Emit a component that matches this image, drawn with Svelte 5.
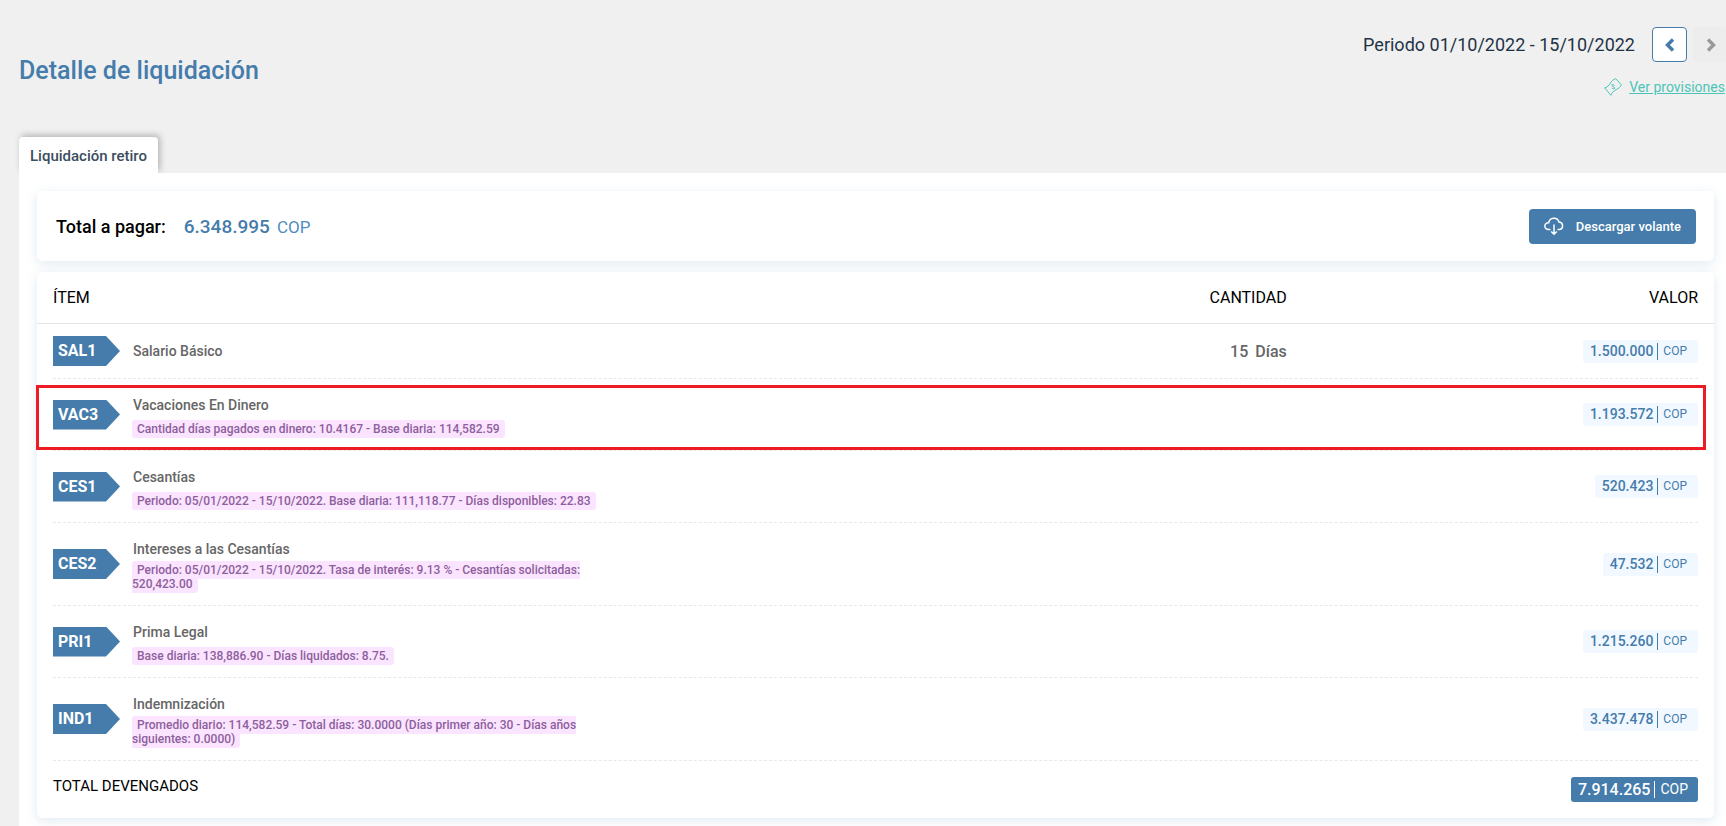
<script lang="ts">
	type Item = {
		code: string;
		name: string;
		note?: string;
		long?: boolean;
		quantity?: string;
		value: string;
		highlighted?: boolean;
	};

	const items: Item[] = [
		{ code: 'SAL1', name: 'Salario Básico', quantity: '15', value: '1.500.000' },
		{
			code: 'VAC3',
			name: 'Vacaciones En Dinero',
			note: 'Cantidad días pagados en dinero: 10.4167 - Base diaria: 114,582.59',
			value: '1.193.572',
			highlighted: true
		},
		{
			code: 'CES1',
			name: 'Cesantías',
			note: 'Periodo: 05/01/2022 - 15/10/2022. Base diaria: 111,118.77 - Días disponibles: 22.83',
			value: '520.423'
		},
		{
			code: 'CES2',
			name: 'Intereses a las Cesantías',
			note: 'Periodo: 05/01/2022 - 15/10/2022. Tasa de interés: 9.13 % - Cesantías solicitadas: 520,423.00',
			long: true,
			value: '47.532'
		},
		{
			code: 'PRI1',
			name: 'Prima Legal',
			note: 'Base diaria: 138,886.90 - Días liquidados: 8.75.',
			value: '1.215.260'
		},
		{
			code: 'IND1',
			name: 'Indemnización',
			note: 'Promedio diario: 114,582.59 - Total días: 30.0000 (Días primer año: 30 - Días años siguientes: 0.0000)',
			long: true,
			value: '3.437.478'
		}
	];
</script>

<div class="page">
	<header class="page-header">
		<h1>Detalle de liquidación</h1>
		<div class="header-side">
			<div class="period">
				<span>Periodo 01/10/2022 - 15/10/2022</span>
				<div class="period-nav">
					<button type="button" aria-label="Periodo anterior">
						<svg width="12" height="14" viewBox="0 0 12 14">
							<path d="M9 1.500 3.500 7 9 12.500" />
						</svg>
					</button>
					<button type="button" aria-label="Periodo siguiente" disabled>
						<svg width="12" height="14" viewBox="0 0 12 14">
							<path d="M3 1.500 8.500 7 3 12.500" />
						</svg>
					</button>
				</div>
			</div>
			<a class="provisions" href="#provisiones">
				<svg width="18" height="18" viewBox="0 0 18 18">
					<path d="M.7 9.800C3.200 9.200 5 7.500 6.300 5.200 7.500 3.200 9.200 1.300 11.700.7L17.300 6.700C16.600 9.200 14.500 10.300 12.200 11.600 9.800 13 7.700 14.500 6.900 17.300Z" />
					<path d="M10.600 7.300c-.7-.9-2.400-.8-2.500.3-.1 1.200 2.400.9 2.400 2.200 0 1.100-1.800 1.200-2.700.3M7.600 6.300l.8.900M10.400 10.300l.8.900" />
				</svg>
				<span>Ver provisiones</span>
			</a>
		</div>
	</header>

	<nav class="tabs">
		<button type="button" class="tab">Liquidación retiro</button>
	</nav>

	<main class="panel">
		<section class="card summary">
			<p class="total">
				<span class="total-label">Total a pagar:</span>
				<span class="total-value">6.348.995</span>
				<span class="total-currency">COP</span>
			</p>
			<button type="button" class="download">
				<svg width="20" height="20" viewBox="0 0 20 20">
					<path d="M6.500 13.500H4.300a3.400 3.400 0 0 1-.1-6.800h.5A5.300 5.300 0 0 1 15 6a3.800 3.800 0 0 1 .6 7.500H13.500" />
					<path d="M10 8.500v9.500M7.200 15.500 10 18.200l2.800-2.700" />
				</svg>
				<span>Descargar volante</span>
			</button>
		</section>

		<table class="card">
			<thead>
				<tr>
					<th>ÍTEM</th>
					<th>CANTIDAD</th>
					<th>VALOR</th>
				</tr>
			</thead>
			<tbody>
				{#each items as item}
					<tr class:highlighted={item.highlighted}>
						<td class="concept">
							<span class="code">{item.code}</span>
							<div class="detail" class:long={item.long}>
								<p class="name">{item.name}</p>
								{#if item.note}
									<p class="note"><span>{item.note}</span></p>
								{/if}
							</div>
						</td>
						<td class="quantity">
							{#if item.quantity}
								<span>{item.quantity}</span>
								<span>Días</span>
							{/if}
						</td>
						<td class="value">
							<span class="pill">
								<span class="amount">{item.value}</span>
								<span class="currency">COP</span>
							</span>
						</td>
					</tr>
				{/each}
			</tbody>
			<tfoot>
				<tr>
					<th colspan="2">TOTAL DEVENGADOS</th>
					<td class="value">
						<span class="pill pill-total">
							<span class="amount">7.914.265</span>
							<span class="currency">COP</span>
						</span>
					</td>
				</tr>
			</tfoot>
		</table>
	</main>
</div>

<style>
	:global(body) {
		background: #f0f0f0;
	}

	.page {
		--blue: #457cab;
		--teal: #4bc5b8;
		font-family: Roboto, sans-serif;
		color: #000;
		padding-left: 19px;
		overflow: hidden;
	}

	h1,
	p {
		margin: 0;
	}

	button {
		font-family: inherit;
		cursor: pointer;
	}

	svg {
		fill: none;
		stroke: currentColor;
	}

	.page-header {
		display: flex;
		justify-content: space-between;
		align-items: flex-start;
		padding-top: 27px;
	}

	h1 {
		margin-top: 28px;
		color: var(--blue);
		font-size: 25px;
		font-weight: 500;
		line-height: 32px;
	}

	.header-side {
		display: flex;
		flex-direction: column;
		align-items: flex-end;
		gap: 15px;
	}

	.period {
		display: flex;
		align-items: center;
		gap: 17px;
		/* the pager runs slightly past the right edge */
		margin-right: -2px;
		color: #1f3347;
		font-size: 18px;
	}

	.period-nav {
		display: flex;
		gap: 6px;
	}

	.period-nav button {
		display: flex;
		align-items: center;
		justify-content: center;
		width: 35px;
		height: 35px;
		padding: 0;
		border: 1px solid var(--blue);
		border-radius: 4px;
		background: #fff;
		color: var(--blue);
	}

	.period-nav button:disabled {
		border-color: #ededed;
		background: #ededed;
		color: #999;
	}

	.period-nav path {
		stroke-width: 3.4;
	}

	.provisions {
		display: flex;
		align-items: center;
		gap: 7px;
		padding-right: 1px;
		color: var(--teal);
		font-size: 14px;
		line-height: 20px;
	}

	.tabs {
		display: flex;
		margin-top: 40px;
	}

	.tab {
		height: 36px;
		padding: 2px 11px 0;
		border: 0;
		border-radius: 4px 4px 0 0;
		background: #fff;
		box-shadow: 2px -2px 6px rgba(0, 0, 0, 0.25);
		color: #3a4d60;
		font-size: 15px;
		font-weight: 500;
	}

	.panel {
		position: relative;
		display: flex;
		flex-direction: column;
		gap: 11px;
		padding: 18px 12px 8px 18px;
		background: #fff;
	}

	.card {
		border-radius: 5px;
		background: #fff;
		box-shadow: 0 3px 12px rgba(69, 124, 171, 0.16);
	}

	.summary {
		display: flex;
		align-items: center;
		justify-content: space-between;
		padding: 18px 18px 17px 19px;
	}

	.total {
		display: flex;
		align-items: baseline;
	}

	.total-label {
		margin-right: 18px;
		font-size: 18px;
		font-weight: 500;
	}

	.total-value {
		margin-right: 7px;
		color: var(--blue);
		font-size: 19px;
		font-weight: 500;
	}

	.total-currency {
		color: #4f8cc0;
		font-size: 17px;
	}

	.download {
		display: flex;
		align-items: center;
		gap: 12px;
		height: 35px;
		padding: 0 15px;
		border: 0;
		border-radius: 4px;
		background: var(--blue);
		color: #fff;
		font-size: 13px;
		font-weight: 500;
	}

	.download svg {
		margin-bottom: 2px;
	}

	.download path {
		stroke-width: 1.5;
	}

	table,
	thead,
	tbody,
	tfoot {
		display: block;
	}

	tr {
		position: relative;
		display: grid;
		grid-template-columns: 2fr 1fr 1fr;
		align-items: center;
	}

	th,
	td {
		padding: 0;
		text-align: right;
	}

	th {
		font-weight: 400;
	}

	th:first-child {
		text-align: left;
	}

	thead {
		padding: 0 16px;
		border-bottom: 1px solid #e4e4e4;
	}

	thead th {
		padding-top: 1px;
		font-size: 16px;
		line-height: 50px;
	}

	tbody,
	tfoot {
		padding: 0 16px;
	}

	tbody tr {
		min-height: 54px;
		border-bottom: 1px dashed #e8e8e8;
	}

	.highlighted::after {
		content: '';
		position: absolute;
		inset: 6px -8px 0 -17px;
		border: 3px solid #ed1c24;
	}

	.concept {
		display: flex;
		align-items: center;
		gap: 12px;
		text-align: left;
	}

	.code {
		flex: none;
		box-sizing: border-box;
		width: 67px;
		padding-left: 5px;
		background: var(--blue);
		clip-path: polygon(0 0, 53px 0, 100% 50%, 53px 100%, 0 100%);
		color: #fff;
		font-size: 16px;
		font-weight: 700;
		line-height: 30px;
	}

	.detail {
		max-width: 480px;
	}

	.detail:has(.note) {
		padding: 16px 0 14px;
	}

	.name {
		padding-left: 1px;
		color: #666;
		font-size: 14px;
		font-weight: 500;
		line-height: 20px;
	}

	.note {
		margin-top: 7px;
		color: #8d5f9c;
		font-size: 12px;
		font-weight: 500;
		line-height: 14px;
	}

	.long .note {
		margin-top: 4px;
	}

	.note span {
		padding: 2px 5px;
		border-radius: 3px;
		background: #fbe4ff;
	}

	.quantity {
		color: #666;
		font-size: 16px;
		font-weight: 500;
	}

	.quantity span + span {
		margin-left: 3px;
	}

	.value {
		display: flex;
		justify-content: flex-end;
	}

	.pill {
		display: flex;
		align-items: center;
		gap: 4px;
		padding: 3px 11px 3px 7px;
		border-radius: 3px;
		background: #f1f8ff;
		color: var(--blue);
		line-height: 17px;
	}

	.amount {
		font-size: 14px;
		font-weight: 500;
	}

	.currency {
		padding-left: 5px;
		border-left: 1px solid currentColor;
		font-size: 12px;
	}

	.pill-total {
		padding: 4px 10px 4px 7px;
		background: var(--blue);
		color: #fff;
	}

	.pill-total .amount {
		font-size: 16px;
	}

	.pill-total .currency {
		font-size: 14px;
	}

	tfoot tr {
		grid-template-columns: 3fr 1fr;
		align-items: start;
		padding: 16px 0;
	}

	tfoot th {
		font-size: 15px;
		line-height: 18px;
	}
</style>
